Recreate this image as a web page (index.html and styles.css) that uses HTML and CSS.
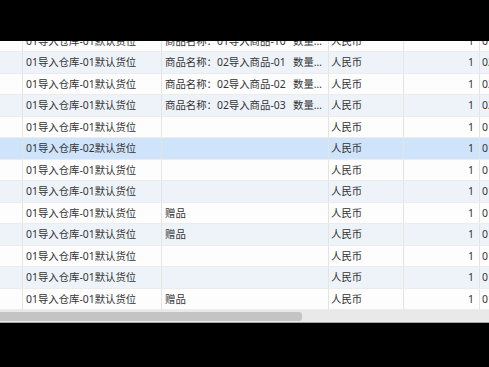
FILE: index.html
```html
<!DOCTYPE html>
<html lang="zh-CN">
<head>
<meta charset="utf-8">
<title>Grid</title>
<link rel="stylesheet" href="styles.css">
</head>
<body>
<div class="screen">
  <div class="top-black"></div>
  <div class="grid-view">
    <div class="grid">
      <div class="row">
        <div class="c c1"></div><div class="c c2">01导入仓库-01默认货位</div><div class="c c3">商品名称：01导入商品-10&nbsp;&nbsp;数量：1个</div><div class="c c4">人民币</div><div class="c c5">1</div><div class="c c6">01000001</div>
      </div>
      <div class="row alt">
        <div class="c c1"></div><div class="c c2">01导入仓库-01默认货位</div><div class="c c3">商品名称：02导入商品-01&nbsp;&nbsp;数量：1个</div><div class="c c4">人民币</div><div class="c c5">1</div><div class="c c6">02000001</div>
      </div>
      <div class="row">
        <div class="c c1"></div><div class="c c2">01导入仓库-01默认货位</div><div class="c c3">商品名称：02导入商品-02&nbsp;&nbsp;数量：1个</div><div class="c c4">人民币</div><div class="c c5">1</div><div class="c c6">02000002</div>
      </div>
      <div class="row alt">
        <div class="c c1"></div><div class="c c2">01导入仓库-01默认货位</div><div class="c c3">商品名称：02导入商品-03&nbsp;&nbsp;数量：1个</div><div class="c c4">人民币</div><div class="c c5">1</div><div class="c c6">02000003</div>
      </div>
      <div class="row">
        <div class="c c1"></div><div class="c c2">01导入仓库-01默认货位</div><div class="c c3"></div><div class="c c4">人民币</div><div class="c c5">1</div><div class="c c6">01000002</div>
      </div>
      <div class="row sel">
        <div class="c c1"></div><div class="c c2">01导入仓库-02默认货位</div><div class="c c3"></div><div class="c c4">人民币</div><div class="c c5">1</div><div class="c c6">01000003</div>
      </div>
      <div class="row">
        <div class="c c1"></div><div class="c c2">01导入仓库-01默认货位</div><div class="c c3"></div><div class="c c4">人民币</div><div class="c c5">1</div><div class="c c6">01000004</div>
      </div>
      <div class="row alt">
        <div class="c c1"></div><div class="c c2">01导入仓库-01默认货位</div><div class="c c3"></div><div class="c c4">人民币</div><div class="c c5">1</div><div class="c c6">01000005</div>
      </div>
      <div class="row">
        <div class="c c1"></div><div class="c c2">01导入仓库-01默认货位</div><div class="c c3">赠品</div><div class="c c4">人民币</div><div class="c c5">1</div><div class="c c6">01000006</div>
      </div>
      <div class="row alt">
        <div class="c c1"></div><div class="c c2">01导入仓库-01默认货位</div><div class="c c3">赠品</div><div class="c c4">人民币</div><div class="c c5">1</div><div class="c c6">01000007</div>
      </div>
      <div class="row">
        <div class="c c1"></div><div class="c c2">01导入仓库-01默认货位</div><div class="c c3"></div><div class="c c4">人民币</div><div class="c c5">1</div><div class="c c6">01000008</div>
      </div>
      <div class="row alt">
        <div class="c c1"></div><div class="c c2">01导入仓库-01默认货位</div><div class="c c3"></div><div class="c c4">人民币</div><div class="c c5">1</div><div class="c c6">01000009</div>
      </div>
      <div class="row">
        <div class="c c1"></div><div class="c c2">01导入仓库-01默认货位</div><div class="c c3">赠品</div><div class="c c4">人民币</div><div class="c c5">1</div><div class="c c6">01000010</div>
      </div>
    </div>
  </div>
  <div class="hscroll"><div class="thumb"></div></div>
  <div class="bottom-black"></div>
</div>
</body>
</html>
```

FILE: styles.css
```css
* { box-sizing: border-box; }
html, body { margin: 0; padding: 0; background: #000; }
body {
  font-family: "Noto Sans", "Noto Sans CJK SC", sans-serif;
  font-size: 10.4px;
  color: #333;
}
.screen { width: 489px; height: 367px; overflow: hidden; display: flex; flex-direction: column; }
.top-black { height: 41px; flex: none; background: #000; }
.grid-view { height: 269px; flex: none; overflow: hidden; background: #fdfdfd; }
.grid { margin-top: -10.5px; }
.row {
  display: grid;
  grid-template-columns: 23px 139px 167px 75px 76px 20px;
  height: 21.5px;
  border-bottom: 1px solid #ececec;
  background: #fdfdfd;
}
.row.alt { background: #eef3fa; }
.row.sel { background: #cfe3fb; }
.c {
  border-right: 1px solid #e4e4e0;
  line-height: 20.5px;
  white-space: nowrap;
  overflow: hidden;
  padding-left: 3px;
}
.c2 { padding-left: 3px; }
.c3 { padding-left: 3px; padding-right: 2px; text-overflow: ellipsis; word-spacing: 1px; }
.c4 { padding-left: 2px; }
.c5 { text-align: right; padding-right: 5px; }
.c6 { padding-left: 2px; border-right: none; text-overflow: clip; }
.hscroll {
  height: 13px;
  flex: none;
  background: #e9e9e9;
  border-bottom: 1px solid #a9a9a9;
  padding-top: 2px;
}
.thumb {
  width: 302px;
  height: 9px;
  background: #c4c4c4;
  border-radius: 0 3px 3px 0;
}
.bottom-black { flex: 1; background: #000; }
```
